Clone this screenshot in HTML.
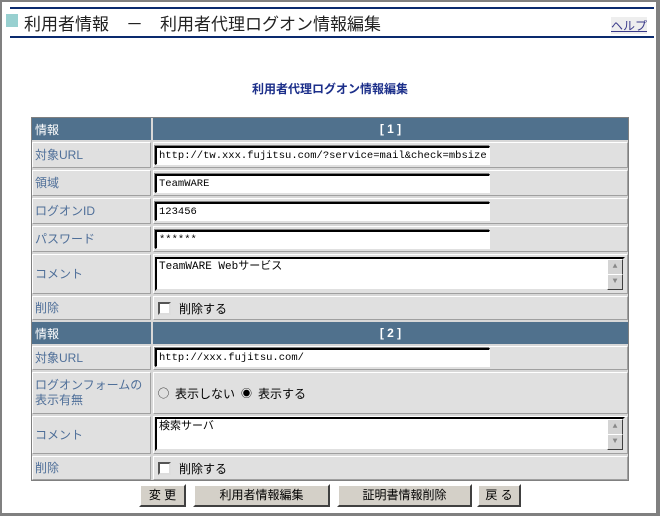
<!DOCTYPE html>
<html><head><meta charset="utf-8"><style>
*{margin:0;padding:0;box-sizing:border-box}
body{width:660px;height:516px;background:#808080;position:relative;overflow:hidden;font-family:"Liberation Sans","Noto Sans CJK JP",sans-serif}
#w{position:absolute;left:2px;top:2px;width:654px;height:511px;background:#fff}
.a{position:absolute}
.hl{position:absolute;left:10px;width:644px;height:2px;background:#0a2a6e}
.c{position:absolute;background-color:#e4e4e4;background-image:radial-gradient(#d4d4d4 0.6px,transparent 0.7px);background-size:2px 2px;border:1px solid #fff;border-right-color:#a0a0a0;border-bottom-color:#a0a0a0}
.lab{color:#4f6f99;font-size:12px;padding-left:2px;display:flex;align-items:center;line-height:15px}
.hd{position:absolute;background:#50718d;color:#fff;font-size:12px;display:flex;align-items:center}
.in{position:absolute;background:#fff;border:1px solid #fff;border-top:2px solid #000;border-left:2px solid #000;box-shadow:-1px -1px 0 #808080;font-family:"Liberation Mono","Noto Sans CJK JP",monospace;font-size:10.5px;padding-left:2px;line-height:16px;color:#000;white-space:nowrap;overflow:hidden}
.ta{position:absolute;background:#fff;border:2px solid #000;border-right-color:#e0e0e0;border-bottom-color:#e0e0e0;font-family:"Liberation Mono","Noto Sans CJK JP",monospace;font-size:11px;padding-left:2px;line-height:17px}
.sb{position:absolute;right:0;width:16px;height:16px;background:#d4d4d4;border:1px solid #fff;border-right-color:#404040;border-bottom-color:#404040;color:#888;font-size:8px;text-align:center;line-height:14px}
.val{font-size:12px;color:#000;display:flex;align-items:center;padding-left:4px}
.cb{display:inline-block;width:13px;height:13px;background:#fff;border:2px solid #555;border-right-color:#ddd;border-bottom-color:#ddd;margin-right:8px}
.btn{position:absolute;top:484px;height:23px;background:#d4d0c8;border:2px solid #fff;border-right-color:#404040;border-bottom-color:#404040;font-size:12px;text-align:center;line-height:18px;color:#000}
</style></head><body><div id="w"></div>
<div class="hl" style="top:7px"></div>
<div class="hl" style="top:36px"></div>
<div class="a" style="left:6px;top:14px;width:12px;height:13px;background:#98d0d0"></div>
<div class="a" style="left:24px;top:10px;font-size:17px;color:#222;white-space:nowrap">利用者情報　－　利用者代理ログオン情報編集</div>
<div class="a" style="left:611px;top:17px;font-size:12px;color:#3a3a8a;text-decoration:underline;background:#eee">ヘルプ</div>
<div class="a" style="left:0;width:660px;top:80px;text-align:center;font-size:12px;font-weight:bold;color:#1c2f8a">利用者代理ログオン情報編集</div>
<div class="a" style="left:31px;top:117px;width:598px;height:364px;border:1px solid #808080;background:#d8d8d8"></div>

<div class="hd" style="left:32px;top:118px;width:119px;height:22px;padding-left:3px">情報</div>
<div class="hd" style="left:153px;top:118px;width:475px;height:22px;justify-content:center;font-weight:bold">[ 1 ]</div>

<div class="c lab" style="left:32px;top:142px;width:119px;height:26px">対象URL</div>
<div class="c" style="left:153px;top:142px;width:475px;height:26px"></div>
<div class="in" style="left:155px;top:146px;width:335px;height:19px">http://tw.xxx.fujitsu.com/?service=mail&amp;check=mbsize</div>

<div class="c lab" style="left:32px;top:170px;width:119px;height:26px">領域</div>
<div class="c" style="left:153px;top:170px;width:475px;height:26px"></div>
<div class="in" style="left:155px;top:174px;width:335px;height:19px">TeamWARE</div>

<div class="c lab" style="left:32px;top:198px;width:119px;height:26px">ログオンID</div>
<div class="c" style="left:153px;top:198px;width:475px;height:26px"></div>
<div class="in" style="left:155px;top:202px;width:335px;height:19px">123456</div>

<div class="c lab" style="left:32px;top:226px;width:119px;height:26px">パスワード</div>
<div class="c" style="left:153px;top:226px;width:475px;height:26px"></div>
<div class="in" style="left:155px;top:230px;width:335px;height:19px">******</div>

<div class="c lab" style="left:32px;top:254px;width:119px;height:40px">コメント</div>
<div class="c" style="left:153px;top:254px;width:475px;height:40px"></div>
<div class="ta" style="left:155px;top:257px;width:470px;height:34px">TeamWARE Webサービス<div class="sb" style="top:0">▲</div><div class="sb" style="top:15px">▼</div></div>

<div class="c lab" style="left:32px;top:296px;width:119px;height:24px">削除</div>
<div class="c val" style="left:153px;top:296px;width:475px;height:24px"><span class="cb"></span>削除する</div>

<div class="hd" style="left:32px;top:322px;width:119px;height:22px;padding-left:3px">情報</div>
<div class="hd" style="left:153px;top:322px;width:475px;height:22px;justify-content:center;font-weight:bold">[ 2 ]</div>

<div class="c lab" style="left:32px;top:346px;width:119px;height:24px">対象URL</div>
<div class="c" style="left:153px;top:346px;width:475px;height:24px"></div>
<div class="in" style="left:155px;top:348px;width:335px;height:19px">http://xxx.fujitsu.com/</div>

<div class="c lab" style="left:32px;top:372px;width:119px;height:42px">ログオンフォームの<br>表示有無</div>
<div class="c val" style="left:153px;top:372px;width:475px;height:42px"><span style="font-size:11px;margin-right:6px">◯</span>表示しない<span style="font-size:11px;margin:0 6px">◉</span>表示する</div>

<div class="c lab" style="left:32px;top:416px;width:119px;height:38px">コメント</div>
<div class="c" style="left:153px;top:416px;width:475px;height:38px"></div>
<div class="ta" style="left:155px;top:417px;width:470px;height:34px">検索サーバ<div class="sb" style="top:0">▲</div><div class="sb" style="top:15px">▼</div></div>

<div class="c lab" style="left:32px;top:456px;width:119px;height:24px">削除</div>
<div class="c val" style="left:153px;top:456px;width:475px;height:24px"><span class="cb"></span>削除する</div>

<div class="btn" style="left:139px;width:47px">変 更</div>
<div class="btn" style="left:193px;width:137px">利用者情報編集</div>
<div class="btn" style="left:337px;width:135px">証明書情報削除</div>
<div class="btn" style="left:477px;width:44px">戻 る</div>
</body></html>
